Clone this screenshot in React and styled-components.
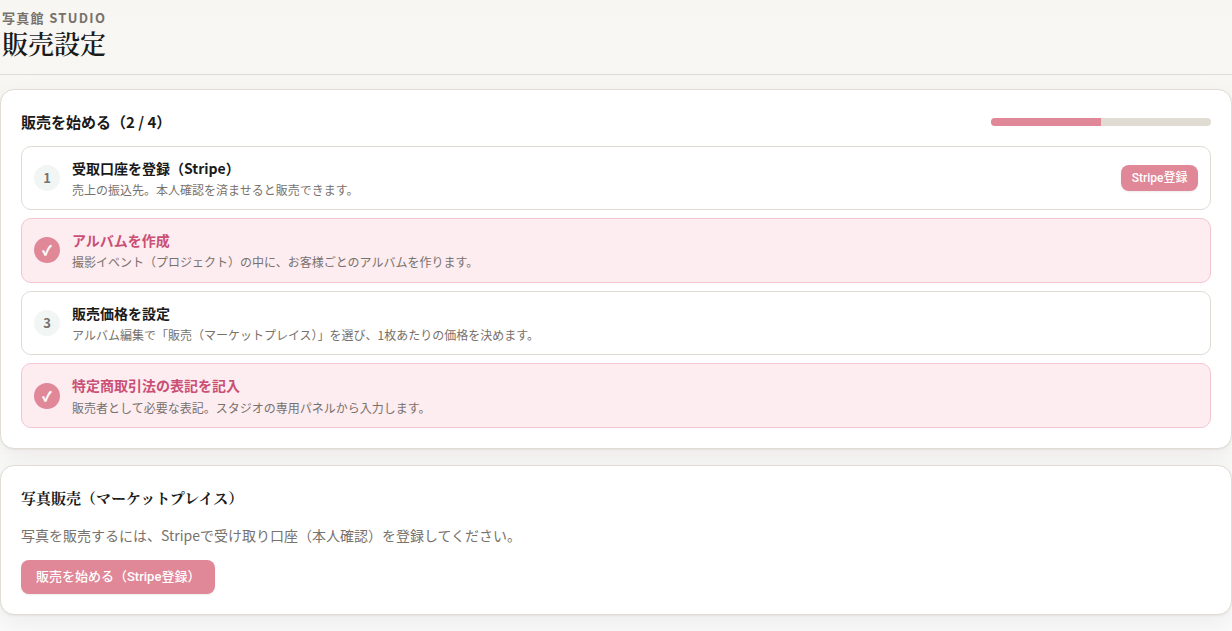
import styled, { createGlobalStyle, css } from "styled-components";

const steps = [
  {
    title: "受取口座を登録（Stripe）",
    description: "売上の振込先。本人確認を済ませると販売できます。",
    done: false,
    action: "Stripe登録",
  },
  {
    title: "アルバムを作成",
    description:
      "撮影イベント（プロジェクト）の中に、お客様ごとのアルバムを作ります。",
    done: true,
  },
  {
    title: "販売価格を設定",
    description:
      "アルバム編集で「販売（マーケットプレイス）」を選び、1枚あたりの価格を決めます。",
    done: false,
  },
  {
    title: "特定商取引法の表記を記入",
    description: "販売者として必要な表記。スタジオの専用パネルから入力します。",
    done: true,
  },
];

export default function App() {
  const doneCount = steps.filter((step) => step.done).length;

  return (
    <>
      <GlobalStyle />
      <Header>
        <Brand>写真館 STUDIO</Brand>
        <PageTitle>販売設定</PageTitle>
      </Header>
      <Main>
        <Card>
          <CardHead>
            <StepsTitle>
              販売を始める（{doneCount} / {steps.length}）
            </StepsTitle>
            <Track>
              <Bar style={{ width: `${(doneCount / steps.length) * 100}%` }} />
            </Track>
          </CardHead>
          <StepList>
            {steps.map((step, i) => (
              <Step key={step.title} $done={step.done}>
                <Badge $done={step.done}>{step.done ? "✓" : i + 1}</Badge>
                <StepBody>
                  <StepName $done={step.done}>{step.title}</StepName>
                  <StepText>{step.description}</StepText>
                </StepBody>
                {step.action && <Button $small>{step.action}</Button>}
              </Step>
            ))}
          </StepList>
        </Card>
        <Card>
          <MarketTitle>写真販売（マーケットプレイス）</MarketTitle>
          <MarketText>
            写真を販売するには、Stripeで受け取り口座（本人確認）を登録してください。
          </MarketText>
          <Button>販売を始める（Stripe登録）</Button>
        </Card>
      </Main>
    </>
  );
}

const GlobalStyle = createGlobalStyle`
  * {
    box-sizing: border-box;
  }

  body {
    margin: 0;
    min-height: 100vh;
    background: linear-gradient(#f7f6f2, #fafafa);
    color: #1a1a1a;
    font-family: "Noto Sans CJK JP", sans-serif;
    font-size: 14px;
    line-height: 1.6;
  }
`;

const Header = styled.header`
  height: 75px;
  padding: 8px 2px 0;
  border-bottom: 1px solid #e0dcd3;
`;

const Brand = styled.div`
  color: #78716c;
  font-size: 13px;
  font-weight: 700;
  letter-spacing: 0.1em;
  line-height: 20px;
`;

const PageTitle = styled.h1`
  margin: 0;
  font-family: "Noto Serif CJK JP", "Noto Serif JP", serif;
  font-size: 26px;
  font-weight: 600;
  line-height: 30px;
`;

const Main = styled.main`
  display: flex;
  flex-direction: column;
  gap: 16px;
  padding-top: 14px;
`;

const Card = styled.section`
  padding: 20px;
  border: 1px solid #e0dcd3;
  border-radius: 14px;
  background: #fff;
  box-shadow: 0 1px 2px rgba(28, 25, 23, 0.05),
    0 8px 24px rgba(28, 25, 23, 0.06);
`;

const CardHead = styled.div`
  display: flex;
  justify-content: space-between;
  align-items: center;
  margin-bottom: 11.55px;
`;

const StepsTitle = styled.h2`
  margin: 0;
  font-size: 15px;
  font-weight: 700;
`;

const Track = styled.div`
  width: 220px;
  height: 8px;
  border-radius: 99px;
  background: #e0dcd3;
  overflow: hidden;
`;

const Bar = styled.div`
  height: 100%;
  background: #e08798;
`;

const StepList = styled.div`
  display: grid;
  gap: 8px;
`;

const Step = styled.div`
  display: flex;
  align-items: center;
  gap: 12px;
  padding: 10px 12px;
  border: 1px solid #e0dcd3;
  border-radius: 10px;
  background: #fff;

  ${(props) =>
    props.$done &&
    css`
      border-color: #f3c6d1;
      background: #fdecf0;
    `};
`;

const Badge = styled.span`
  display: grid;
  place-items: center;
  flex: none;
  width: 26px;
  height: 26px;
  padding-bottom: ${(props) => (props.$done ? "0" : "0.4px")};
  border-radius: 50%;
  background: ${(props) => (props.$done ? "#e08798" : "#f1f5f4")};
  color: ${(props) => (props.$done ? "#fff" : "#78716c")};
  font-size: 13px;
  font-weight: 700;
  line-height: 20px;
  -webkit-text-stroke: ${(props) => (props.$done ? "0.4px #fff" : "0")};
`;

const StepBody = styled.div`
  flex: 1;
  min-width: 0;
`;

const StepName = styled.div`
  color: ${(props) => (props.$done ? "#c94f74" : "#1a1a1a")};
  font-weight: 700;
`;

const StepText = styled.div`
  margin: 0.93px 0 0.07px;
  color: #78716c;
  font-size: 12px;
`;

const Button = styled.button`
  height: 34px;
  padding: 0 15px 3px;
  border: 0;
  border-radius: 8px;
  background: #e08798;
  box-shadow: 0 1px 2px rgba(28, 25, 23, 0.08);
  color: #fff;
  font-family: Roboto, "Noto Sans CJK JP", sans-serif;
  font-size: 13px;
  font-weight: 500;

  ${(props) =>
    props.$small &&
    css`
      height: 26px;
      padding: 0 10.5px 3px;
      font-size: 12px;
    `};
`;

const MarketTitle = styled.h2`
  margin: 0 0 14px;
  font-family: "Noto Serif CJK JP", "Noto Serif JP", serif;
  font-size: 15px;
  font-weight: 700;
`;

const MarketText = styled.p`
  margin: 0 0 14px;
  color: #78716c;
`;
